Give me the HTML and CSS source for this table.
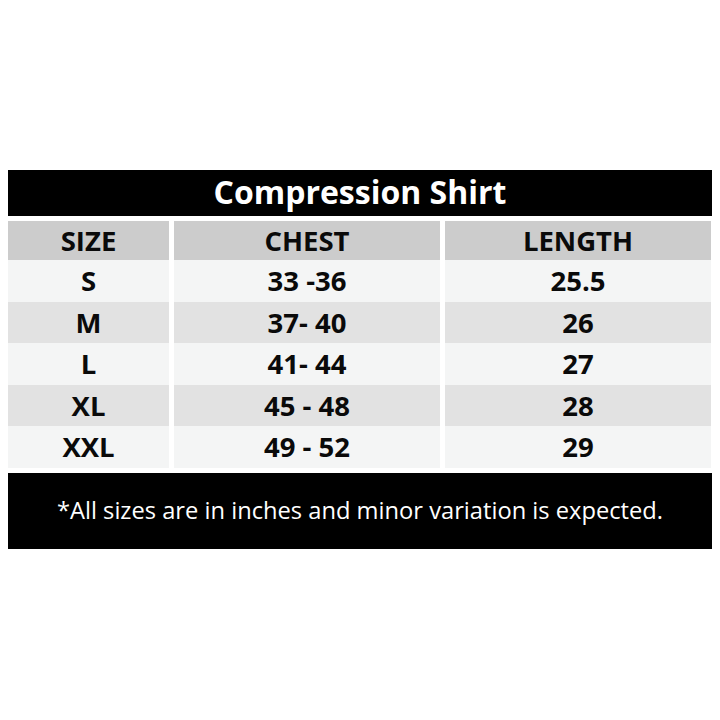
FILE: index.html
```html
<!DOCTYPE html>
<html>
<head>
<meta charset="utf-8">
<link rel="stylesheet" href="styles.css">
</head>
<body>
<div class="chart">
  <div class="title">Compression Shirt</div>
  <div class="table">
    <div class="cell head">SIZE</div>
    <div class="cell head">CHEST</div>
    <div class="cell head">LENGTH</div>
    <div class="cell light">S</div>
    <div class="cell light">33 -36</div>
    <div class="cell light">25.5</div>
    <div class="cell dark">M</div>
    <div class="cell dark">37- 40</div>
    <div class="cell dark">26</div>
    <div class="cell light">L</div>
    <div class="cell light">41- 44</div>
    <div class="cell light">27</div>
    <div class="cell dark">XL</div>
    <div class="cell dark">45 - 48</div>
    <div class="cell dark">28</div>
    <div class="cell light">XXL</div>
    <div class="cell light">49 - 52</div>
    <div class="cell light">29</div>
  </div>
  <div class="note">*All sizes are in inches and minor variation is expected.</div>
</div>
</body>
</html>
```
FILE: styles.css
```css
html, body {
  margin: 0;
  padding: 0;
  background: #ffffff;
}
body {
  width: 720px;
  height: 720px;
  font-family: "Open Sans", "Liberation Sans", sans-serif;
}
.chart {
  padding: 170px 8px 0 8px;
  display: flex;
  flex-direction: column;
  gap: 5px;
}
.title {
  height: 46px;
  background: #000000;
  color: #ffffff;
  font-weight: 700;
  font-size: 32px;
  display: flex;
  align-items: center;
  justify-content: center;
  line-height: 1;
  padding-bottom: 2px;
  box-sizing: border-box;
}
.table {
  display: grid;
  grid-template-columns: 161px 266px 266px;
  grid-template-rows: 39px repeat(5, 41.6px);
  column-gap: 5px;
  margin-right: 1px;
}
.cell {
  display: flex;
  align-items: center;
  justify-content: center;
  font-weight: 700;
  font-size: 27.5px;
  color: #0a0a0a;
  line-height: 1;
}
.head { background: #cccccc; }
.light { background: #f4f5f5; }
.dark { background: #e2e2e2; }
.note {
  height: 76px;
  background: #000000;
  color: #ffffff;
  font-size: 23.7px;
  display: flex;
  align-items: center;
  justify-content: center;
  line-height: 1;
}
```
